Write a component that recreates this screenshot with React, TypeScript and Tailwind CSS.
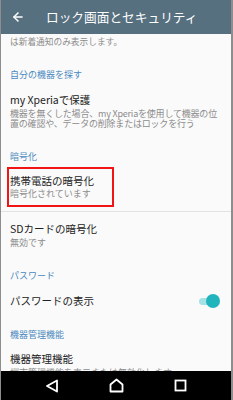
import { ArrowLeft } from 'lucide-react';

const font = { fontFamily: '"Noto Sans CJK JP", "Noto Sans", sans-serif' };

const Category = ({ label, className = '' }: { label: string; className?: string }) => (
  <div className={`h-4 text-[9px] leading-4 text-[#4a89bf] ${className}`}>{label}</div>
);

const Title = ({ label, className = '' }: { label: string; className?: string }) => (
  <div className={`h-[14px] text-[10.5px] leading-[14px] text-[#222] ${className}`}>{label}</div>
);

const Sub = ({ children, className = '' }: { children: React.ReactNode; className?: string }) => (
  <div className={`whitespace-nowrap text-[9px] leading-[10px] text-[#8c8c8c] ${className}`}>{children}</div>
);

export default function App() {
  return (
    <div
      className="flex h-[400px] w-[233px] flex-col overflow-hidden border-l border-r-2 border-[#8d8d8d] bg-[#fafafa]"
      style={font}
    >
      <header className="flex h-[34px] shrink-0 items-center bg-[#56707f] pl-[10px] text-white">
        <ArrowLeft size={14} strokeWidth={2.6} />
        <span className="ml-[21px] text-[12.7px] leading-none">ロック画面とセキュリティ</span>
      </header>

      <main className="min-h-0 flex-1 overflow-hidden">
        <div className="px-[9px]">
          <div className="h-4 text-[8.7px] leading-4 text-[#8c8c8c]">は新着通知のみ表示します。</div>
          <Category label="自分の機器を探す" className="mt-[17px]" />
          <Title label="my Xperiaで保護" className="mt-[10px]" />
          <Sub className="mt-[2px] tracking-[-0.2px]">
            機器を無くした場合、my Xperiaを使用して機器の位
            <br />
            置の確認や、データの削除またはロックを行う
          </Sub>
          <Category label="暗号化" className="mt-[20px]" />
        </div>

        <div className="relative px-[9px]">
          <Title label="携帯電話の暗号化" className="pt-[9px] !h-[23px]" />
          <Sub className="mt-[1px]">暗号化されています</Sub>
          <div className="h-3" />
          <div className="absolute left-[6px] top-[2px] h-[40px] w-[107px] border-2 border-[#f01414]" />
        </div>
        <div className="h-px bg-[#e2e2e2]" />

        <div className="px-[9px]">
          <Title label="SDカードの暗号化" className="mt-[10px]" />
          <Sub className="mt-[2px]">無効です</Sub>
          <Category label="パスワード" className="mt-[20px]" />
          <div className="mt-[10px] flex h-[14px] items-center justify-between pr-[2px]">
            <Title label="パスワードの表示" />
            <div className="relative h-[14px] w-[22px]">
              <div className="absolute left-[1px] top-[4px] h-[7px] w-[18px] rounded-full bg-[#a5e2e5]" />
              <div className="absolute right-0 top-0 h-[14px] w-[14px] rounded-full bg-[#21b4bd]" />
            </div>
          </div>
          <Category label="機器管理機能" className="mt-[19px]" />
          <Title label="機器管理機能" className="mt-[9px]" />
          <Sub className="mt-[2px]">端末管理機能を表示または無効化します</Sub>
        </div>
      </main>

      <nav className="flex h-[29px] shrink-0 items-center bg-black">
        <div className="flex w-full items-center justify-between px-[44px]">
          <svg width="14" height="14" viewBox="0 0 14 14">
            <path d="M12 1.5 L2 7 L12 12.5 Z" fill="none" stroke="white" strokeWidth="1.8" strokeLinejoin="round" />
          </svg>
          <svg width="15" height="15" viewBox="0 0 15 15">
            <path d="M7.5 1.5 L13.5 6.5 L13.5 13.5 L1.5 13.5 L1.5 6.5 Z" fill="none" stroke="white" strokeWidth="1.8" strokeLinejoin="round" />
          </svg>
          <svg width="13" height="13" viewBox="0 0 13 13">
            <rect x="1.5" y="1.5" width="10" height="10" fill="none" stroke="white" strokeWidth="1.8" />
          </svg>
        </div>
      </nav>
    </div>
  );
}
